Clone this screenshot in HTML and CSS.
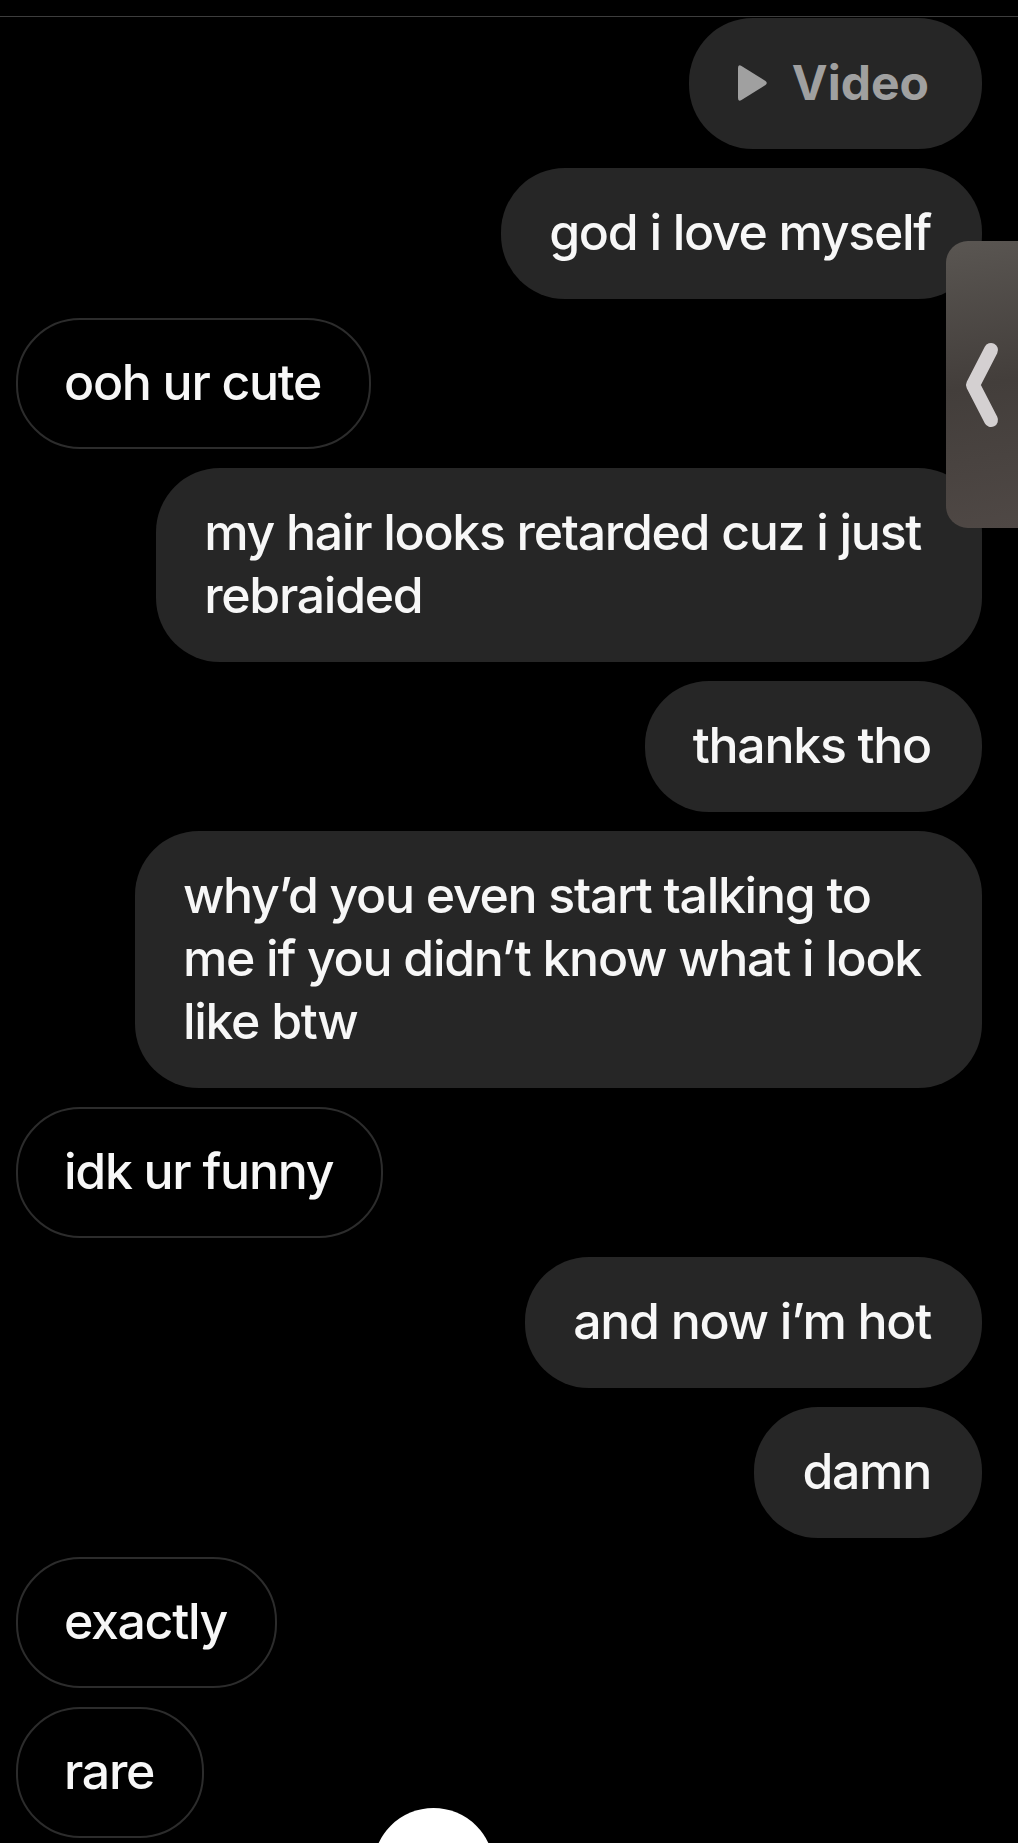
FILE: index.html
```html
<!DOCTYPE html>
<html lang="en">
  <head>
    <meta charset="UTF-8" />
    <meta name="viewport" content="width=device-width, initial-scale=1.0" />
    <title>Messages</title>
    <link rel="stylesheet" href="styles.css">
  </head>
  <body>
    <div class="top-bar"></div>
    <div class="thread">
      <div class="msg sent video">
        <svg class="play" width="32" height="38" viewBox="0 0 32 38">
          <path d="M2 4 Q2 0 5.5 2 L29.5 17 Q32 19 29.5 21 L5.5 36 Q2 38 2 34 Z" fill="#a0a0a0" />
        </svg>
        <span>Video</span>
      </div>
      <div class="msg sent">god i love myself</div>
      <div class="msg received">ooh ur cute</div>
      <div class="msg sent wrap">my hair looks retarded cuz i just<br>rebraided</div>
      <div class="msg sent">thanks tho</div>
      <div class="msg sent wrap">why’d you even start talking to<br>me if you didn’t know what i look<br>like btw</div>
      <div class="msg received">idk ur funny</div>
      <div class="msg sent">and now i’m hot</div>
      <div class="msg sent">damn</div>
      <div class="msg received">exactly</div>
      <div class="msg received">rare</div>
    </div>

    <!-- side drawer handle -->
    <div class="drawer-tab">
      <svg width="72" height="287" viewBox="0 0 72 287">
        <path d="M45 109 L27 144 L45 179" fill="none" stroke="#d4d0d1" stroke-width="14" stroke-linecap="round" stroke-linejoin="round" />
      </svg>
    </div>

    <div class="home-dot"></div>
  </body>
</html>
```

FILE: styles.css
```css
body {
  margin: 0;
  height: 1843px;
  overflow: hidden;
  position: relative;
  background: #000;
  color: #f7f7f7;
  font-family: "Inter", "Roboto", sans-serif;
}
.top-bar {
  height: 16px;
  border-bottom: 1px solid #3d3d3d;
}
.thread {
  display: flex;
  flex-direction: column;
  gap: 19px;
  padding: 1px 36px 0 16px;
}
.msg {
  font-size: 50px;
  font-weight: 500;
  line-height: 63px;
  letter-spacing: -1.3px;
  padding: 33px 51px 35px 48px;
  border-radius: 64px;
  white-space: nowrap;
}
.sent {
  align-self: flex-end;
  background: #262626;
}
.wrap {
  padding-right: 61px;
}
.received {
  align-self: flex-start;
  border: 2px solid #2c2c2c;
  padding: 31px 48px 33px 46px;
}
.video {
  display: flex;
  align-items: center;
  gap: 24px;
  padding: 33px 53px 35px 47px;
  color: #a0a0a0;
  font-size: 48px;
  font-weight: 700;
  letter-spacing: 0;
}
.play {
  display: block;
}
.drawer-tab {
  position: absolute;
  top: 241px;
  left: 946px;
  width: 72px;
  height: 287px;
  border-radius: 22px 0 0 22px;
  background: linear-gradient(170deg, #5a5652 0%, #433e3b 50%, #4f4845 100%);
}
.drawer-tab svg {
  display: block;
}
.home-dot {
  position: absolute;
  top: 1808px;
  left: 373px;
  width: 121px;
  height: 121px;
  border-radius: 50%;
  background: #fff;
}
```
